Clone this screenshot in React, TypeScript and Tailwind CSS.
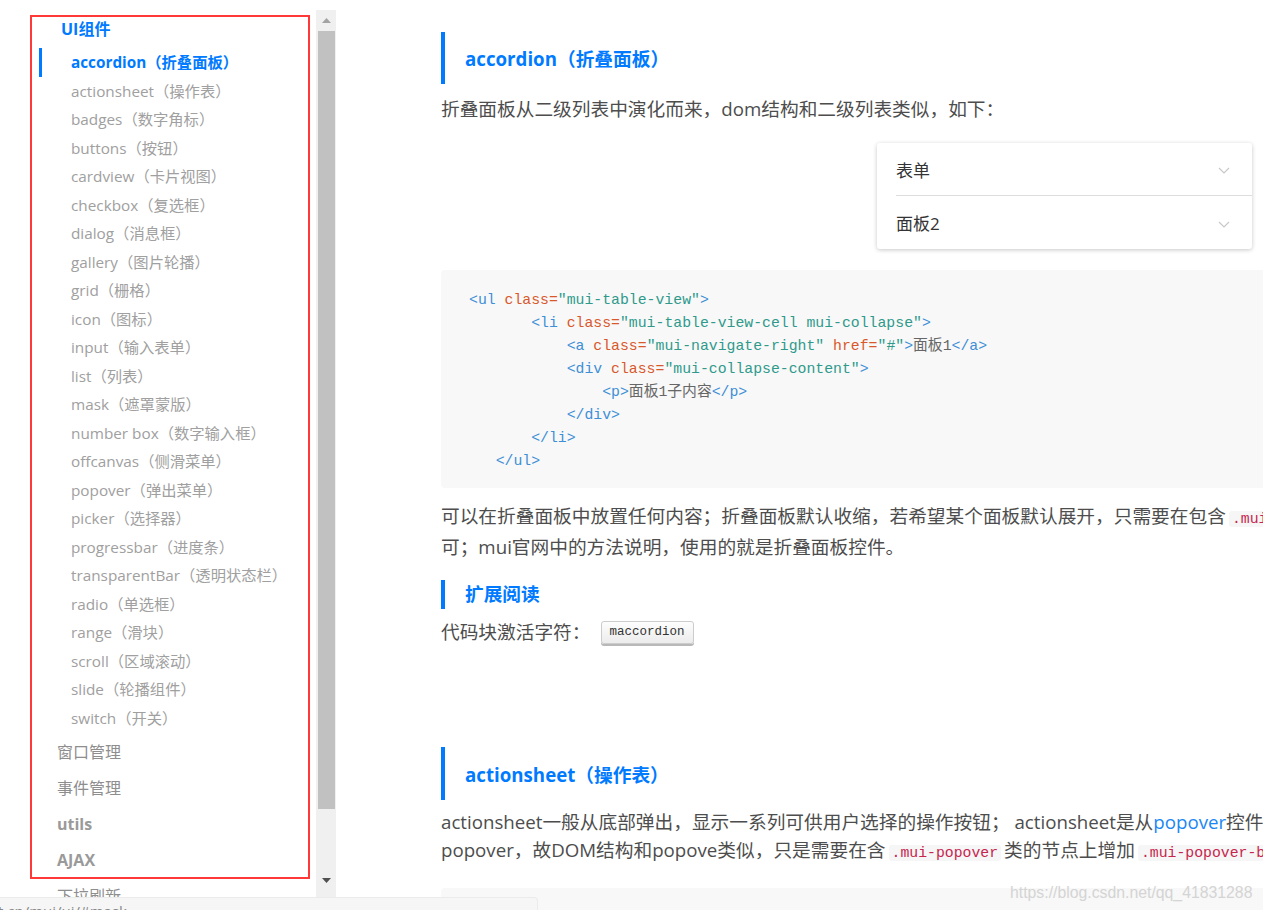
import React from "react";

const items = [
  "accordion（折叠面板）",
  "actionsheet（操作表）",
  "badges（数字角标）",
  "buttons（按钮）",
  "cardview（卡片视图）",
  "checkbox（复选框）",
  "dialog（消息框）",
  "gallery（图片轮播）",
  "grid（栅格）",
  "icon（图标）",
  "input（输入表单）",
  "list（列表）",
  "mask（遮罩蒙版）",
  "number box（数字输入框）",
  "offcanvas（侧滑菜单）",
  "popover（弹出菜单）",
  "picker（选择器）",
  "progressbar（进度条）",
  "transparentBar（透明状态栏）",
  "radio（单选框）",
  "range（滑块）",
  "scroll（区域滚动）",
  "slide（轮播组件）",
  "switch（开关）",
];

const groups = [
  { label: "窗口管理", bold: false },
  { label: "事件管理", bold: false },
  { label: "utils", bold: true },
  { label: "AJAX", bold: true },
  { label: "下拉刷新", bold: false },
];

type Tok = [string, "t" | "a" | "s" | "x" | "p"];

const codeLines: Tok[][] = [
  [["<ul", "t"], [" class=", "a"], ['"mui-table-view"', "s"], [">", "t"]],
  [["       ", "p"], ["<li", "t"], [" class=", "a"], ['"mui-table-view-cell mui-collapse"', "s"], [">", "t"]],
  [["           ", "p"], ["<a", "t"], [" class=", "a"], ['"mui-navigate-right"', "s"], [" href=", "a"], ['"#"', "s"], [">", "t"], ["面板1", "x"], ["</a>", "t"]],
  [["           ", "p"], ["<div", "t"], [" class=", "a"], ['"mui-collapse-content"', "s"], [">", "t"]],
  [["               ", "p"], ["<p>", "t"], ["面板1子内容", "x"], ["</p>", "t"]],
  [["           ", "p"], ["</div>", "t"]],
  [["       ", "p"], ["</li>", "t"]],
  [["   ", "p"], ["</ul>", "t"]],
];

const tokClass = {
  t: "text-[#3d8fd6]",
  a: "text-[#d8582c]",
  s: "text-[#2f9a8c]",
  x: "text-[#666666]",
  p: "",
};

function Chevron() {
  return (
    <svg width="12" height="7" viewBox="0 0 12 7" fill="none">
      <path d="M1 1l5 5 5-5" stroke="#c8c8c8" strokeWidth="1.2" />
    </svg>
  );
}

function InlineCode({ children }: { children: React.ReactNode }) {
  return (
    <code className="mx-[3px] rounded-[3px] bg-[#f6f6f6] px-[3px] font-['Liberation_Mono',monospace] text-[14.8px] text-[#c7254e]">
      {children}
    </code>
  );
}

function SideNav() {
  return (
    <div className="flex pt-[10px]">
      <div className="h-[900px] w-[316px] overflow-hidden">
        <div className="pt-[1px] pl-[61px] text-[16px] font-bold leading-[37px] text-[#007aff]">
          UI组件
        </div>
        <ul className="ml-[39px]">
          {items.map((it, i) => (
            <li
              key={it}
              className={
                i === 0
                  ? "h-[28.5px] border-l-[3px] border-[#007aff] pl-[29px] text-[15.3px] font-bold leading-[28.5px] text-[#007aff]"
                  : "h-[28.5px] pl-[32px] text-[15.3px] leading-[28.5px] text-[#a0a0a0]"
              }
            >
              {it}
            </li>
          ))}
        </ul>
        <ul className="mt-[2px]">
          {groups.map((g) => (
            <li
              key={g.label}
              className={
                g.bold
                  ? "h-[36px] pl-[57px] text-[16px] font-bold leading-[36px] text-[#9a9a9a]"
                  : "h-[36px] pl-[57px] text-[16px] leading-[36px] text-[#8e8e8e]"
              }
            >
              {g.label}
            </li>
          ))}
        </ul>
      </div>
      <div className="flex h-[900px] w-[20px] flex-col bg-[#f0f0f0]">
        <div className="flex h-[21px] items-center justify-center">
          <svg width="9" height="5" viewBox="0 0 9 5">
            <path d="M0 5L4.5 0 9 5z" fill="#a3a3a3" />
          </svg>
        </div>
        <div className="ml-[2px] h-[778px] w-[17px] bg-[#c1c1c1]" />
        <div className="flex h-[82px] items-end justify-center pb-[8px]">
          <svg width="9" height="5" viewBox="0 0 9 5">
            <path d="M0 0L4.5 5 9 0z" fill="#505050" />
          </svg>
        </div>
      </div>
    </div>
  );
}

function Heading({ children, h }: { children: React.ReactNode; h: string }) {
  return (
    <div className={`flex items-center border-l-4 border-[#007aff] pl-[20px] text-[18.7px] font-bold text-[#007aff] ${h}`}>
      {children}
    </div>
  );
}

function Main() {
  return (
    <div className="w-[900px] shrink-0 pl-[105px] font-['Open_Sans','Noto_Sans_CJK_SC',sans-serif] text-[18.7px] text-[#4d4d4d]">
      <div className="mt-[32px]">
        <Heading h="h-[52px] pt-[2px]">accordion（折叠面板）</Heading>
      </div>
      <p className="mt-[11px] whitespace-nowrap leading-[28px]">
        折叠面板从二级列表中演化而来，dom结构和二级列表类似，如下：
      </p>

      <div className="mt-[20px] ml-[436px] w-[375px] rounded-[3px] bg-white text-[17px] text-[#333] shadow-[0_1px_4px_rgba(0,0,0,0.22)]">
        <div className="ml-[19px] flex h-[53px] items-center justify-between border-b border-[#dddddd] pt-[3px] pr-[22px]">
          <span>表单</span>
          <Chevron />
        </div>
        <div className="ml-[19px] flex h-[53px] items-center justify-between pt-[3px] pr-[22px]">
          <span>面板2</span>
          <Chevron />
        </div>
      </div>

      <pre className="mt-[21px] w-[900px] rounded-[4px] bg-[#f8f8f8] pt-[19px] pb-[15px] pl-[28px] font-['Liberation_Mono','Noto_Sans_CJK_SC',monospace] text-[14.8px] leading-[23px]">
        {codeLines.map((line, i) => (
          <div key={i}>
            {line.map(([txt, k], j) => (
              <span key={j} className={tokClass[k]}>
                {txt}
              </span>
            ))}
          </div>
        ))}
      </pre>

      <div className="mt-[14px] leading-[28px]">
        <p className="whitespace-nowrap">
          可以在折叠面板中放置任何内容；折叠面板默认收缩，若希望某个面板默认展开，只需要在包含
          <InlineCode>.mui-collapse</InlineCode>类的li节点上增加
          <InlineCode>.mui-active</InlineCode>类即
        </p>
        <p className="whitespace-nowrap">可；mui官网中的方法说明，使用的就是折叠面板控件。</p>
      </div>

      <div className="mt-[19px]">
        <Heading h="h-[29px]">扩展阅读</Heading>
      </div>
      <div className="mt-[9px] flex h-[28px] items-center">
        <span>代码块激活字符：</span>
        <span className="ml-[10px] mt-[1px] rounded-[3px] border border-[#cccccc] bg-[linear-gradient(#fdfdfd,#ececec)] px-[8px] font-['Liberation_Mono',monospace] text-[12.5px] leading-[21px] text-[#333] shadow-[0_2px_0_#b8b8b8]">
          maccordion
        </span>
      </div>

      <div className="mt-[101px]">
        <Heading h="h-[53px] pt-[3px]">actionsheet（操作表）</Heading>
      </div>
      <div className="mt-[8px] leading-[27.5px]">
        <p className="whitespace-nowrap">
          actionsheet一般从底部弹出，显示一系列可供用户选择的操作按钮； actionsheet是从
          <span className="text-[#1a87f5]">popover</span>控件基础上演变而来，实际上就是一个特殊的
        </p>
        <p className="whitespace-nowrap">
          popover，故DOM结构和popove类似，只是需要在含<InlineCode>.mui-popover</InlineCode>类的节点上增加
          <InlineCode>.mui-popover-bottom</InlineCode>
        </p>
      </div>
      <div className="mt-[21px] h-[60px] w-[900px] rounded-[4px] bg-[#f8f8f8]" />
    </div>
  );
}

export default function App() {
  return (
    <div className="relative h-[910px] w-[1263px] overflow-hidden bg-white font-['Open_Sans','Noto_Sans_CJK_SC',sans-serif]">
      <div className="flex">
        <SideNav />
        <Main />
      </div>

      {/* red annotation box */}
      <div className="pointer-events-none absolute top-[15px] left-[30px] h-[864px] w-[280px] border-2 border-[#ff3838]" />

      {/* csdn watermark */}
      <div className="absolute top-[881px] left-[1010px] font-['Liberation_Sans',sans-serif] text-[15.8px] whitespace-nowrap text-[#d4d4d4]">
        https://blog.csdn.net/qq_41831288
      </div>

      {/* browser status bubble */}
      <div className="absolute top-[897px] left-0 h-[20px] w-[538px] overflow-hidden rounded-tr-[4px] border-t border-r border-[#ebebeb] bg-[#f6f6f6]">
        <div className="ml-[-2px] pt-[3px] font-['Open_Sans',sans-serif] text-[15px] leading-[20px] whitespace-nowrap text-[#888]">
          t.cn/mui/ui/#mask
        </div>
      </div>
    </div>
  );
}
